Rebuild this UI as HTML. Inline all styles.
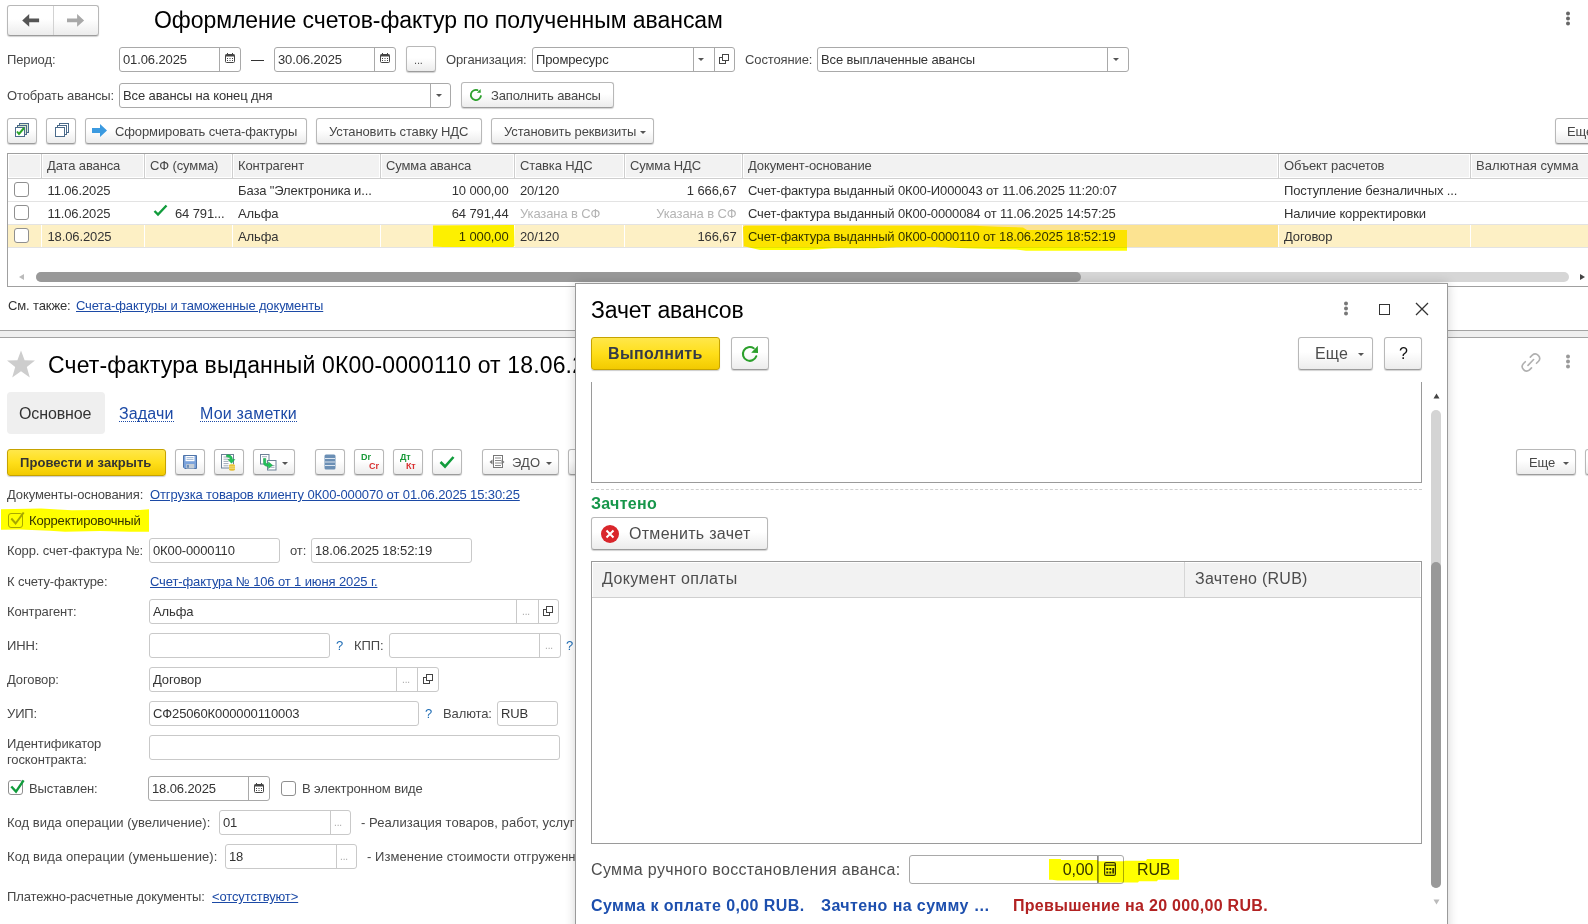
<!DOCTYPE html>
<html><head><meta charset="utf-8">
<style>
*{box-sizing:border-box}
html,body{margin:0;padding:0;width:1588px;height:924px;overflow:hidden;background:#fff;position:relative}
body{font-family:"Liberation Sans",sans-serif;font-size:13px;color:#474747}
.a{position:absolute}
.t{position:absolute;white-space:nowrap;line-height:18px;letter-spacing:-0.12px}
.f{position:absolute;border:1px solid #a9a9a9;border-radius:3px;background:#fff}
.f2{position:absolute;border:1px solid #c9c9c9;border-radius:3px;background:#fff}
.dv{position:absolute;top:0;bottom:0;width:1px;background:#a9a9a9}
.dv2{position:absolute;top:0;bottom:0;width:1px;background:#c9c9c9}
.b{position:absolute;border:1px solid #b8b8b8;border-bottom-color:#9c9c9c;border-radius:3px;background:linear-gradient(#fff 0%,#fff 45%,#ececec 100%);box-shadow:0 1px 1px rgba(0,0,0,.18)}
.by{position:absolute;border:1px solid #c6a300;border-radius:3px;background:linear-gradient(#ffe74a 0%,#ffdf1a 50%,#f2ca00 100%);box-shadow:0 1px 1px rgba(0,0,0,.2)}
.dd{position:absolute;width:0;height:0;border-left:3.5px solid transparent;border-right:3.5px solid transparent;border-top:3.5px solid #555}
.lnk{color:#1c4aa6;text-decoration:underline}
.hl{position:absolute;background:#ffff00;mix-blend-mode:multiply}
.hs{position:absolute;mix-blend-mode:multiply}
.cb{position:absolute;width:15px;height:15px;border:1px solid #8f8f8f;border-radius:3px;background:#fff}
</style></head><body>

<!-- ===== TOP HEADER ===== -->
<div class="b" style="left:7px;top:5px;width:92px;height:31px"></div>
<div class="a" style="left:53px;top:6px;width:1px;height:29px;background:#d2d2d2"></div>
<svg class="a" style="left:21px;top:13px" width="20" height="15" viewBox="0 0 20 15"><path d="M1.2 7.4 L8.2 1.1 L8.2 5.6 L18.1 5.6 L18.1 9.2 L8.2 9.2 L8.2 13.7 Z" fill="#555"/></svg>
<svg class="a" style="left:66px;top:13px" width="20" height="15" viewBox="0 0 20 15"><path d="M18.1 7.4 L11.1 1.1 L11.1 5.6 L1 5.6 L1 9.2 L11.1 9.2 L11.1 13.7 Z" fill="#a8a8a8"/></svg>
<div class="t" style="left:154px;top:6px;font-size:23px;line-height:28px;color:#000;letter-spacing:-0.05px">Оформление счетов-фактур по полученным авансам</div>
<svg class="a" style="left:1564px;top:11px" width="8" height="16"><circle cx="4" cy="2.5" r="2" fill="#666"/><circle cx="4" cy="7.5" r="2" fill="#666"/><circle cx="4" cy="12.5" r="2" fill="#666"/></svg>

<!-- row 1 -->
<div class="t" style="left:7px;top:51px">Период:</div>
<div class="f" style="left:119px;top:47px;width:122px;height:25px"><div class="dv" style="left:99px"></div></div>
<div class="t" style="left:123px;top:51px;color:#333">01.06.2025</div>
<svg class="a" style="left:225px;top:53px" width="10" height="10" viewBox="0 0 10 10"><rect x="0.5" y="1.5" width="9" height="8" rx="1" fill="none" stroke="#444" stroke-width="1"/><rect x="0.5" y="1.5" width="9" height="2" fill="#444"/><rect x="2" y="0" width="1" height="2" fill="#444"/><rect x="7" y="0" width="1" height="2" fill="#444"/><rect x="2" y="5" width="1" height="1" fill="#444"/><rect x="4.5" y="5" width="1" height="1" fill="#444"/><rect x="7" y="5" width="1" height="1" fill="#444"/><rect x="2" y="7" width="1" height="1" fill="#444"/><rect x="4.5" y="7" width="1" height="1" fill="#444"/><rect x="7" y="7" width="1" height="1" fill="#444"/></svg>
<div class="a" style="left:251px;top:60px;width:13px;height:1px;background:#333"></div>
<div class="f" style="left:274px;top:47px;width:122px;height:25px"><div class="dv" style="left:99px"></div></div>
<div class="t" style="left:278px;top:51px;color:#333">30.06.2025</div>
<svg class="a" style="left:380px;top:53px" width="10" height="10" viewBox="0 0 10 10"><rect x="0.5" y="1.5" width="9" height="8" rx="1" fill="none" stroke="#444" stroke-width="1"/><rect x="0.5" y="1.5" width="9" height="2" fill="#444"/><rect x="2" y="0" width="1" height="2" fill="#444"/><rect x="7" y="0" width="1" height="2" fill="#444"/><rect x="2" y="5" width="1" height="1" fill="#444"/><rect x="4.5" y="5" width="1" height="1" fill="#444"/><rect x="7" y="5" width="1" height="1" fill="#444"/><rect x="2" y="7" width="1" height="1" fill="#444"/><rect x="4.5" y="7" width="1" height="1" fill="#444"/><rect x="7" y="7" width="1" height="1" fill="#444"/></svg>
<div class="b" style="left:406px;top:46px;width:30px;height:26px"></div>
<div class="t" style="left:414px;top:51px;font-size:11px;color:#555">...</div>
<div class="t" style="left:446px;top:51px">Организация:</div>
<div class="f" style="left:532px;top:47px;width:203px;height:25px"><div class="dv" style="left:160px"></div><div class="dv" style="left:181px"></div></div>
<div class="t" style="left:536px;top:51px;color:#333">Промресурс</div>
<div class="dd" style="left:698px;top:58px"></div>
<svg class="a" style="left:718px;top:53px" width="12" height="12" viewBox="0 0 12 12"><rect x="1.5" y="4.5" width="6" height="6" fill="#fff" stroke="#444"/><rect x="4.5" y="1.5" width="6" height="6" fill="#fff" stroke="#444"/></svg>
<div class="t" style="left:745px;top:51px">Состояние:</div>
<div class="f" style="left:817px;top:47px;width:312px;height:25px"><div class="dv" style="left:289px"></div></div>
<div class="t" style="left:821px;top:51px;color:#333">Все выплаченные авансы</div>
<div class="dd" style="left:1113px;top:58px"></div>

<!-- row 2 -->
<div class="t" style="left:7px;top:87px">Отобрать авансы:</div>
<div class="f" style="left:119px;top:83px;width:332px;height:25px"><div class="dv" style="left:310px"></div></div>
<div class="t" style="left:123px;top:87px;color:#333">Все авансы на конец дня</div>
<div class="dd" style="left:436px;top:94px"></div>
<div class="b" style="left:461px;top:82px;width:153px;height:26px"></div>
<svg class="a" style="left:467px;top:86px" width="18" height="18" viewBox="0 0 18 18"><path d="M13.94 10.01 A5.1 5.1 0 1 1 10.53 4.10" fill="none" stroke="#2ca02c" stroke-width="1.8" stroke-linecap="round"/><path d="M13.6 2.9 L13.8 6.8 L9.9 6.7 Z" fill="#2ca02c"/></svg>
<div class="t" style="left:491px;top:87px">Заполнить авансы</div>

<!-- toolbar -->
<div class="b" style="left:7px;top:118px;width:30px;height:26px"></div>
<svg class="a" style="left:13px;top:122px" width="18" height="18" viewBox="0 0 18 18"><rect x="6.5" y="1.5" width="9" height="9" fill="#d8e8d0" stroke="#4a6a8a"/><rect x="4.5" y="3.5" width="9" height="9" fill="#d8e8d0" stroke="#4a6a8a"/><rect x="2.5" y="5.5" width="9" height="9" fill="#fff" stroke="#4a6a8a"/><path d="M4 9.5 L6 12 L11 6" fill="none" stroke="#2aa52a" stroke-width="2"/></svg>
<div class="b" style="left:46px;top:118px;width:30px;height:26px"></div>
<svg class="a" style="left:53px;top:122px" width="18" height="18" viewBox="0 0 18 18"><rect x="6.5" y="1.5" width="9" height="9" fill="#fff" stroke="#4a6a8a"/><rect x="4.5" y="3.5" width="9" height="9" fill="#fff" stroke="#4a6a8a"/><rect x="2.5" y="5.5" width="9" height="9" fill="#fff" stroke="#4a6a8a"/></svg>
<div class="b" style="left:85px;top:118px;width:222px;height:26px"></div>
<svg class="a" style="left:92px;top:124px" width="16" height="13" viewBox="0 0 16 13"><path d="M0 4 L8 4 L8 0 L15 6.5 L8 13 L8 9 L0 9 Z" fill="#3b9ae0"/></svg>
<div class="t" style="left:115px;top:123px">Сформировать счета-фактуры</div>
<div class="b" style="left:316px;top:118px;width:166px;height:26px"></div>
<div class="t" style="left:329px;top:123px">Установить ставку НДС</div>
<div class="b" style="left:491px;top:118px;width:163px;height:26px"></div>
<div class="t" style="left:504px;top:123px">Установить реквизиты</div>
<div class="dd" style="left:640px;top:131px"></div>
<div class="b" style="left:1555px;top:118px;width:60px;height:26px"></div>
<div class="t" style="left:1567px;top:123px">Еще</div>

<!-- table -->
<div class="a" style="left:7px;top:153px;width:1600px;height:134px;border:1px solid #a0a0a0;background:#fff"></div>
<div class="a" style="left:9px;top:155px;width:1590px;height:22px;background:#f2f2f2"></div>
<div class="a" style="left:8px;top:178px;width:1590px;height:1px;background:#cfcfcf"></div>
<!-- header column separators -->
<div class="a" style="left:40px;top:154px;width:3px;height:24px;background:linear-gradient(to right,#fff 0,#fff 1px,#cfcfcf 1px,#cfcfcf 2px,#fff 2px)"></div>
<div class="a" style="left:143px;top:154px;width:3px;height:24px;background:linear-gradient(to right,#fff 0,#fff 1px,#cfcfcf 1px,#cfcfcf 2px,#fff 2px)"></div>
<div class="a" style="left:231px;top:154px;width:3px;height:24px;background:linear-gradient(to right,#fff 0,#fff 1px,#cfcfcf 1px,#cfcfcf 2px,#fff 2px)"></div>
<div class="a" style="left:379px;top:154px;width:3px;height:24px;background:linear-gradient(to right,#fff 0,#fff 1px,#cfcfcf 1px,#cfcfcf 2px,#fff 2px)"></div>
<div class="a" style="left:513px;top:154px;width:3px;height:24px;background:linear-gradient(to right,#fff 0,#fff 1px,#cfcfcf 1px,#cfcfcf 2px,#fff 2px)"></div>
<div class="a" style="left:623px;top:154px;width:3px;height:24px;background:linear-gradient(to right,#fff 0,#fff 1px,#cfcfcf 1px,#cfcfcf 2px,#fff 2px)"></div>
<div class="a" style="left:741px;top:154px;width:3px;height:24px;background:linear-gradient(to right,#fff 0,#fff 1px,#cfcfcf 1px,#cfcfcf 2px,#fff 2px)"></div>
<div class="a" style="left:1277px;top:154px;width:3px;height:24px;background:linear-gradient(to right,#fff 0,#fff 1px,#cfcfcf 1px,#cfcfcf 2px,#fff 2px)"></div>
<div class="a" style="left:1469px;top:154px;width:3px;height:24px;background:linear-gradient(to right,#fff 0,#fff 1px,#cfcfcf 1px,#cfcfcf 2px,#fff 2px)"></div>
<div class="t" style="left:47px;top:157px">Дата аванса</div>
<div class="t" style="left:150px;top:157px">СФ (сумма)</div>
<div class="t" style="left:238px;top:157px">Контрагент</div>
<div class="t" style="left:386px;top:157px">Сумма аванса</div>
<div class="t" style="left:520px;top:157px">Ставка НДС</div>
<div class="t" style="left:630px;top:157px">Сумма НДС</div>
<div class="t" style="left:748px;top:157px">Документ-основание</div>
<div class="t" style="left:1284px;top:157px">Объект расчетов</div>
<div class="t" style="left:1476px;top:157px;letter-spacing:0.05px">Валютная сумма</div>

<!-- rows -->
<div class="a" style="left:8px;top:201px;width:1590px;height:1px;background:#e3e3e3"></div>
<div class="a" style="left:8px;top:224px;width:1590px;height:1px;background:#e3e3e3"></div>
<div class="a" style="left:8px;top:247px;width:1590px;height:1px;background:#e3e3e3"></div>
<!-- selected row -->
<div class="a" style="left:8px;top:225px;width:1590px;height:22px;background:#fdf0c5"></div>
<div class="a" style="left:41px;top:225px;width:1px;height:22px;background:#fff"></div>
<div class="a" style="left:144px;top:225px;width:1px;height:22px;background:#fff"></div>
<div class="a" style="left:232px;top:225px;width:1px;height:22px;background:#fff"></div>
<div class="a" style="left:380px;top:225px;width:1px;height:22px;background:#fff"></div>
<div class="a" style="left:514px;top:225px;width:1px;height:22px;background:#fff"></div>
<div class="a" style="left:624px;top:225px;width:1px;height:22px;background:#fff"></div>
<div class="a" style="left:742px;top:225px;width:1px;height:22px;background:#fff"></div>
<div class="a" style="left:743px;top:225px;width:535px;height:22px;background:#fce391"></div>
<div class="a" style="left:1278px;top:225px;width:1px;height:22px;background:#fff"></div>
<div class="a" style="left:1470px;top:225px;width:1px;height:22px;background:#fff"></div>

<div class="cb" style="left:14px;top:182px"></div>
<div class="cb" style="left:14px;top:205px"></div>
<div class="cb" style="left:14px;top:228px"></div>

<div class="t" style="left:47.5px;top:182px;color:#333">11.06.2025</div>
<div class="t" style="left:238px;top:182px;color:#333">База "Электроника и...</div>
<div class="t" style="right:1079.5px;top:182px;color:#333">10 000,00</div>
<div class="t" style="left:520px;top:182px;color:#333">20/120</div>
<div class="t" style="right:851.5px;top:182px;color:#333">1 666,67</div>
<div class="t" style="left:748px;top:182px;color:#333;letter-spacing:-0.14px">Счет-фактура выданный 0К00-И000043 от 11.06.2025 11:20:07</div>
<div class="t" style="left:1284px;top:182px;color:#333">Поступление безналичных ...</div>

<div class="t" style="left:47.5px;top:205px;color:#333">11.06.2025</div>
<svg class="a" style="left:153px;top:204px" width="15" height="13" viewBox="0 0 15 13"><path d="M1.5 7 L5 10.5 L13.5 1.5" fill="none" stroke="#119c3c" stroke-width="2.4"/></svg>
<div class="t" style="left:175px;top:205px;color:#333">64 791...</div>
<div class="t" style="left:238px;top:205px;color:#333">Альфа</div>
<div class="t" style="right:1079.5px;top:205px;color:#333">64 791,44</div>
<div class="t" style="left:520px;top:205px;color:#b4b4b4">Указана в СФ</div>
<div class="t" style="right:851.5px;top:205px;color:#b4b4b4">Указана в СФ</div>
<div class="t" style="left:748px;top:205px;color:#333;letter-spacing:-0.14px">Счет-фактура выданный 0К00-0000084 от 11.06.2025 14:57:25</div>
<div class="t" style="left:1284px;top:205px;color:#333">Наличие корректировки</div>

<!-- highlights top table -->



<div class="t" style="left:47.5px;top:228px;color:#333">18.06.2025</div>
<div class="t" style="left:238px;top:228px;color:#333">Альфа</div>
<div class="t" style="right:1079.5px;top:228px;color:#333">1 000,00</div>
<div class="t" style="left:520px;top:228px;color:#333">20/120</div>
<div class="t" style="right:851.5px;top:228px;color:#333">166,67</div>
<div class="t" style="left:748px;top:228px;color:#333;letter-spacing:-0.14px">Счет-фактура выданный 0К00-0000110 от 18.06.2025 18:52:19</div>
<div class="t" style="left:1284px;top:228px;color:#333">Договор</div>

<!-- h scrollbar -->
<svg class="a" style="left:18px;top:273px" width="8" height="8"><path d="M1 4 L6 1 L6 7 Z" fill="#bbb"/></svg>
<div class="a" style="left:36px;top:272px;width:1533px;height:10px;border-radius:5px;background:#d6d6d6"></div>
<div class="a" style="left:36px;top:272px;width:1045px;height:10px;border-radius:5px;background:#999"></div>
<svg class="a" style="left:1578px;top:273px" width="8" height="8"><path d="M7 4 L2 1 L2 7 Z" fill="#444"/></svg>

<div class="t" style="left:8px;top:297px;color:#333">См. также:</div>
<div class="t lnk" style="left:76px;top:297px;letter-spacing:-0.15px">Счета-фактуры и таможенные документы</div>

<!-- splitter -->
<div class="a" style="left:0;top:330px;width:1588px;height:8px;background:#efefef;border-top:1px solid #a3a3a3;border-bottom:1px solid #a3a3a3"></div>


<!-- ===== DOCUMENT FORM (bottom) ===== -->
<svg class="a" style="left:6px;top:350px" width="30" height="29" viewBox="0 0 30 29"><path d="M15 0.5 L18.6 10.3 L29 10.6 L20.8 17 L23.8 27.5 L15 21.3 L6.2 27.5 L9.2 17 L1 10.6 L11.4 10.3 Z" fill="#cdcdcd"/></svg>
<div class="t" style="left:48px;top:350.5px;font-size:23px;line-height:28px;color:#000;letter-spacing:0.15px">Счет-фактура выданный 0К00-0000110 от 18.06.2025</div>
<svg class="a" style="left:1515px;top:345px" width="30" height="33" viewBox="0 0 30 33"><path d="M15.3 12.1 L17.3 10.1 A4.4 4.4 0 0 1 23.5 16.3 L21.5 18.3 M10.3 16.7 L8.3 18.7 A4.4 4.4 0 0 0 14.5 24.9 L16.5 22.9 M13 20.4 L18.6 14.5" fill="none" stroke="#b0b0b0" stroke-width="1.6" stroke-linecap="round"/></svg>
<svg class="a" style="left:1564px;top:354px" width="8" height="16"><circle cx="4" cy="2.5" r="2" fill="#999"/><circle cx="4" cy="7.5" r="2" fill="#999"/><circle cx="4" cy="12.5" r="2" fill="#999"/></svg>

<div class="a" style="left:7px;top:392px;width:98px;height:42px;background:#efefef;border-radius:4px"></div>
<div class="t" style="left:19px;top:405px;font-size:16px;line-height:18px;color:#333">Основное</div>
<div class="t" style="left:119px;top:406px;font-size:16px;line-height:15px;letter-spacing:0.15px;color:#1c4aa6;border-bottom:1px dotted #1c4aa6">Задачи</div>
<div class="t" style="left:200px;top:406px;font-size:16px;line-height:15px;letter-spacing:0.2px;color:#1c4aa6;border-bottom:1px dotted #1c4aa6">Мои заметки</div>

<div class="by" style="left:7px;top:449px;width:159px;height:27px"></div>
<div class="t" style="left:20px;top:454px;font-weight:bold;color:#333;letter-spacing:0.06px">Провести и закрыть</div>
<div class="b" style="left:175px;top:449px;width:30px;height:26px"></div>
<svg class="a" style="left:183px;top:455px" width="14" height="14" viewBox="0 0 14 14"><path d="M0.5 0.5 H13.5 V13.5 H1.8 L0.5 12.2 Z" fill="#7ba3dc" stroke="#4f74a8"/><rect x="2.5" y="1" width="9" height="5.2" fill="#fff"/><path d="M3.5 2.6h7M3.5 4.4h7" stroke="#8aa6cc" stroke-width="0.8"/><rect x="3.3" y="9" width="8" height="4.5" fill="#c4cdd6"/><rect x="4.2" y="9.8" width="1.6" height="3" fill="#5a7fb0"/></svg>
<div class="b" style="left:214px;top:449px;width:30px;height:26px"></div>
<svg class="a" style="left:221px;top:453px" width="16" height="18" viewBox="0 0 16 18"><rect x="0.5" y="1.5" width="12" height="13.5" fill="#fff" stroke="#6d8197"/><path d="M2.5 4h5M2.5 6.2h5M2.5 8.4h5M2.5 10.6h5M2.5 12.8h5" stroke="#8796a8" stroke-width="0.8"/><path d="M5.5 2 Q11 1 11.5 6.5 L13.8 6.5 L10.5 10.3 L7 6.5 L9.3 6.5 Q9 3.8 5.5 3.8 Z" fill="#22c25a" stroke="#139a40" stroke-width="0.5"/><ellipse cx="11" cy="12.3" rx="3" ry="1.2" fill="#f1d35a"/><rect x="8" y="12.3" width="6" height="4.2" fill="#e6bd2e"/><ellipse cx="11" cy="16.5" rx="3" ry="1.2" fill="#e6bd2e"/><path d="M8 13.8h6M8 15.3h6" stroke="#fff3b0" stroke-width="0.6"/></svg>
<div class="b" style="left:253px;top:449px;width:42px;height:26px"></div>
<svg class="a" style="left:260px;top:453px" width="18" height="18" viewBox="0 0 18 18"><rect x="0.5" y="1.5" width="8.5" height="9.5" fill="#fff" stroke="#6d8197"/><path d="M2 3.7h5" stroke="#8796a8" stroke-width="0.8"/><rect x="7.5" y="7.5" width="8.5" height="9.5" fill="#fff" stroke="#6d8197"/><path d="M10.5 12.5h4M10.5 14.3h4" stroke="#8796a8" stroke-width="0.8"/><path d="M3.5 5.5 L5.8 5.5 L5.8 9.5 Q6 11.3 8.5 11 L8.5 9 L12.5 12.2 L8.5 15.5 L8.5 13.3 Q3.5 13.7 3.5 9.5 Z" fill="#22c25a" stroke="#139a40" stroke-width="0.5"/></svg>
<div class="dd" style="left:282px;top:462px"></div>
<div class="b" style="left:315px;top:449px;width:30px;height:26px"></div>
<svg class="a" style="left:324px;top:454px" width="12" height="16" viewBox="0 0 12 16"><rect x="0.5" y="0.5" width="11" height="15" rx="1.5" fill="#6b8fb5"/><path d="M1 4.5h10M1 8h10M1 11.5h10" stroke="#dde6f0" stroke-width="1.2"/></svg>
<div class="b" style="left:354px;top:449px;width:30px;height:26px"></div>
<div class="t" style="left:361px;top:452px;font-size:9px;line-height:10px;font-weight:bold;color:#1a9a3a">Dr</div>
<div class="t" style="left:369px;top:461px;font-size:9px;line-height:10px;font-weight:bold;color:#d93030">Cr</div>
<div class="b" style="left:393px;top:449px;width:30px;height:26px"></div>
<div class="t" style="left:400px;top:452px;font-size:9px;line-height:10px;font-weight:bold;color:#1a9a3a">Дт</div>
<div class="t" style="left:406px;top:461px;font-size:9px;line-height:10px;font-weight:bold;color:#d93030">Кт</div>
<div class="b" style="left:432px;top:449px;width:30px;height:26px"></div>
<svg class="a" style="left:439px;top:455px" width="16" height="14" viewBox="0 0 16 14"><path d="M1.5 7 L6 11.5 L14.5 2" fill="none" stroke="#119c3c" stroke-width="2.6"/></svg>
<div class="b" style="left:482px;top:449px;width:77px;height:26px"></div>
<svg class="a" style="left:489px;top:454px" width="16" height="16" viewBox="0 0 16 16"><rect x="4.5" y="1.5" width="9" height="12" fill="#fff" stroke="#777"/><path d="M6 4h6M6 6.5h6M6 9h6M6 11.5h6" stroke="#888"/><path d="M0.5 8 L3.5 5.5 L3.5 10.5 Z" fill="#777"/><path d="M15.5 8 L12.5 5.5 L12.5 10.5 Z" fill="#777"/></svg>
<div class="t" style="left:512px;top:454px;color:#4d4d4d;letter-spacing:0.2px">ЭДО</div>
<div class="dd" style="left:546px;top:462px"></div>
<div class="b" style="left:568px;top:449px;width:30px;height:26px"></div>
<div class="b" style="left:1516px;top:449px;width:60px;height:26px"></div>
<div class="t" style="left:1529px;top:454px">Еще</div>
<div class="dd" style="left:1563px;top:462px"></div>
<div class="b" style="left:1585px;top:449px;width:30px;height:26px"></div>

<div class="t" style="left:7px;top:486px">Документы-основания:</div>
<div class="t lnk" style="left:150px;top:486px">Отгрузка товаров клиенту 0К00-000070 от 01.06.2025 15:30:25</div>


<div class="cb" style="left:8px;top:513px;width:15px;height:15px;border-color:#a8a8a8"></div>
<svg class="a" style="left:9px;top:511px" width="16" height="15" viewBox="0 0 16 15"><path d="M2.3 7.5 L6.6 12.5 L14.7 1.5" fill="none" stroke="#a6a6a6" stroke-width="2"/></svg>
<div class="t" style="left:29px;top:512px;color:#333;letter-spacing:-0.17px">Корректировочный</div>

<div class="t" style="left:7px;top:542px">Корр. счет-фактура №:</div>
<div class="f2" style="left:149px;top:538px;width:131px;height:25px"></div>
<div class="t" style="left:153px;top:542px;color:#333">0К00-0000110</div>
<div class="t" style="left:290px;top:542px">от:</div>
<div class="f2" style="left:311px;top:538px;width:161px;height:25px"></div>
<div class="t" style="left:315px;top:542px;color:#333">18.06.2025 18:52:19</div>

<div class="t" style="left:7px;top:573px">К счету-фактуре:</div>
<div class="t lnk" style="left:150px;top:573px">Счет-фактура № 106 от 1 июня 2025 г.</div>

<div class="t" style="left:7px;top:603px">Контрагент:</div>
<div class="f2" style="left:149px;top:599px;width:410px;height:25px"><div class="dv2" style="left:366px"></div><div class="dv2" style="left:388px"></div></div>
<div class="t" style="left:153px;top:603px;color:#333">Альфа</div>
<div class="t" style="left:522px;top:603px;font-size:10px;color:#aaa">...</div>
<svg class="a" style="left:542px;top:605px" width="12" height="12" viewBox="0 0 12 12"><rect x="1.5" y="4.5" width="6" height="6" fill="#fff" stroke="#444"/><rect x="4.5" y="1.5" width="6" height="6" fill="#fff" stroke="#444"/></svg>

<div class="t" style="left:7px;top:637px">ИНН:</div>
<div class="f2" style="left:149px;top:633px;width:181px;height:25px"></div>
<div class="t" style="left:336px;top:637px;color:#1f6db5">?</div>
<div class="t" style="left:354px;top:637px">КПП:</div>
<div class="f2" style="left:389px;top:633px;width:172px;height:25px"><div class="dv2" style="left:149px"></div></div>
<div class="t" style="left:545px;top:637px;font-size:10px;color:#aaa">...</div>
<div class="t" style="left:566px;top:637px;color:#1f6db5">?</div>

<div class="t" style="left:7px;top:671px">Договор:</div>
<div class="f2" style="left:149px;top:667px;width:290px;height:25px"><div class="dv2" style="left:246px"></div><div class="dv2" style="left:267px"></div></div>
<div class="t" style="left:153px;top:671px;color:#333">Договор</div>
<div class="t" style="left:402px;top:671px;font-size:10px;color:#aaa">...</div>
<svg class="a" style="left:422px;top:673px" width="12" height="12" viewBox="0 0 12 12"><rect x="1.5" y="4.5" width="6" height="6" fill="#fff" stroke="#444"/><rect x="4.5" y="1.5" width="6" height="6" fill="#fff" stroke="#444"/></svg>

<div class="t" style="left:7px;top:705px">УИП:</div>
<div class="f2" style="left:149px;top:701px;width:270px;height:25px"></div>
<div class="t" style="left:153px;top:705px;color:#333">СФ25060К000000110003</div>
<div class="t" style="left:425px;top:705px;color:#1f6db5">?</div>
<div class="t" style="left:443px;top:705px">Валюта:</div>
<div class="f2" style="left:497px;top:701px;width:61px;height:25px"></div>
<div class="t" style="left:501px;top:705px;color:#333">RUB</div>

<div class="t" style="left:7px;top:735px">Идентификатор</div>
<div class="t" style="left:7px;top:751px">госконтракта:</div>
<div class="f2" style="left:149px;top:735px;width:411px;height:25px"></div>

<div class="cb" style="left:8px;top:780px"></div>
<svg class="a" style="left:9px;top:778px" width="17" height="17" viewBox="0 0 17 17"><path d="M2.3 8.5 L7 13.6 L14.6 2.4" fill="none" stroke="#119c3c" stroke-width="2.4"/></svg>
<div class="t" style="left:29px;top:780px">Выставлен:</div>
<div class="f" style="left:148px;top:776px;width:122px;height:25px"><div class="dv" style="left:99px"></div></div>
<div class="t" style="left:152px;top:780px;color:#333">18.06.2025</div>
<svg class="a" style="left:254px;top:783px" width="10" height="10" viewBox="0 0 10 10"><rect x="0.5" y="1.5" width="9" height="8" rx="1" fill="none" stroke="#444" stroke-width="1"/><rect x="0.5" y="1.5" width="9" height="2" fill="#444"/><rect x="2" y="0" width="1" height="2" fill="#444"/><rect x="7" y="0" width="1" height="2" fill="#444"/><rect x="2" y="5" width="1" height="1" fill="#444"/><rect x="4.5" y="5" width="1" height="1" fill="#444"/><rect x="7" y="5" width="1" height="1" fill="#444"/><rect x="2" y="7" width="1" height="1" fill="#444"/><rect x="4.5" y="7" width="1" height="1" fill="#444"/><rect x="7" y="7" width="1" height="1" fill="#444"/></svg>
<div class="cb" style="left:281px;top:781px"></div>
<div class="t" style="left:302px;top:780px">В электронном виде</div>

<div class="t" style="left:7px;top:814px;letter-spacing:0.02px">Код вида операции (увеличение):</div>
<div class="f2" style="left:219px;top:810px;width:132px;height:25px"><div class="dv2" style="left:110px"></div></div>
<div class="t" style="left:223px;top:814px;color:#333">01</div>
<div class="t" style="left:334px;top:814px;font-size:10px;color:#aaa">...</div>
<div class="t" style="left:361px;top:814px;letter-spacing:0.05px">- Реализация товаров, работ, услуг</div>

<div class="t" style="left:7px;top:848px;letter-spacing:0.08px">Код вида операции (уменьшение):</div>
<div class="f2" style="left:225px;top:844px;width:132px;height:25px"><div class="dv2" style="left:110px"></div></div>
<div class="t" style="left:229px;top:848px;color:#333">18</div>
<div class="t" style="left:340px;top:848px;font-size:10px;color:#aaa">...</div>
<div class="t" style="left:367px;top:848px;letter-spacing:0.05px">- Изменение стоимости отгруженных</div>

<div class="t" style="left:7px;top:888px">Платежно-расчетные документы:</div>
<div class="t lnk" style="left:212px;top:888px">&lt;отсутствуют&gt;</div>


<!-- ===== DIALOG ===== -->
<div class="a" style="left:575px;top:283px;width:873px;height:660px;background:#fff;border:1px solid #9a9a9a;box-shadow:0 0 10px rgba(0,0,0,.18)"></div>
<div class="t" style="left:591px;top:296px;font-size:23px;line-height:28px;color:#000">Зачет авансов</div>
<svg class="a" style="left:1342px;top:301px" width="8" height="16"><circle cx="4" cy="2.5" r="2" fill="#777"/><circle cx="4" cy="7.5" r="2" fill="#777"/><circle cx="4" cy="12.5" r="2" fill="#777"/></svg>
<div class="a" style="left:1379px;top:304px;width:11px;height:11px;border:1.3px solid #333"></div>
<svg class="a" style="left:1415px;top:302px" width="14" height="14" viewBox="0 0 14 14"><path d="M1 1 L13 13 M13 1 L1 13" stroke="#333" stroke-width="1.3"/></svg>

<div class="by" style="left:591px;top:337px;width:129px;height:33px"></div>
<div class="t" style="left:608px;top:345px;font-size:16px;line-height:18px;font-weight:bold;color:#343a48;letter-spacing:0.35px">Выполнить</div>
<div class="b" style="left:731px;top:337px;width:38px;height:33px"></div>
<svg class="a" style="left:740px;top:344px" width="20" height="20" viewBox="0 0 20 20"><path d="M16.28 12.26 A6.9 6.9 0 1 1 13.76 4.25" fill="none" stroke="#2ca02c" stroke-width="2.1" stroke-linecap="round"/><path d="M17.8 1.8 L18 8.9 L11.2 8.8 Z" fill="#2ca02c"/></svg>
<div class="b" style="left:1298px;top:337px;width:75px;height:33px"></div>
<div class="t" style="left:1315px;top:345px;font-size:16px;line-height:18px;color:#4d4d4d;letter-spacing:0.2px">Еще</div>
<div class="dd" style="left:1358px;top:353px"></div>
<div class="b" style="left:1384px;top:337px;width:38px;height:33px"></div>
<div class="t" style="left:1399px;top:345px;font-size:16px;line-height:18px;color:#111;letter-spacing:0">?</div>

<div class="a" style="left:591px;top:382px;width:831px;height:101px;border-left:1px solid #9a9a9a;border-right:1px solid #9a9a9a;border-bottom:1px solid #9a9a9a"></div>
<div class="a" style="left:591px;top:489px;width:831px;height:1px;border-top:1px dashed #d0d0d0"></div>
<div class="t" style="left:591px;top:495px;font-size:16px;line-height:18px;font-weight:bold;color:#16964a;letter-spacing:0.28px">Зачтено</div>
<div class="b" style="left:591px;top:517px;width:177px;height:33px"></div>
<svg class="a" style="left:601px;top:525px" width="18" height="18" viewBox="0 0 18 18"><circle cx="9" cy="9" r="9" fill="#d9262b"/><path d="M5.5 5.5 L12.5 12.5 M12.5 5.5 L5.5 12.5" stroke="#fff" stroke-width="2"/></svg>
<div class="t" style="left:629px;top:525px;font-size:16px;line-height:18px;color:#4d4d4d;letter-spacing:0.29px">Отменить зачет</div>

<div class="a" style="left:591px;top:561px;width:831px;height:283px;border:1px solid #9a9a9a"></div>
<div class="a" style="left:593px;top:563px;width:827px;height:34px;background:#f2f2f2"></div>
<div class="a" style="left:592px;top:597px;width:829px;height:1px;background:#cfcfcf"></div>
<div class="a" style="left:1184px;top:562px;width:1px;height:35px;background:#d6d6d6"></div>
<div class="t" style="left:602px;top:570px;font-size:16px;line-height:18px;color:#4d4d4d;letter-spacing:0.4px">Документ оплаты</div>
<div class="t" style="left:1195px;top:570px;font-size:16px;line-height:18px;color:#4d4d4d;letter-spacing:0.27px">Зачтено (RUB)</div>

<div class="t" style="left:591px;top:861px;font-size:16px;line-height:18px;color:#4d4d4d;letter-spacing:0.35px">Сумма ручного восстановления аванса:</div>
<div class="f" style="left:909px;top:855px;width:215px;height:29px"><div class="dv" style="left:188px"></div></div>

<div class="a" style="left:1097px;top:856px;width:1px;height:27px;background:#888"></div>
<div class="t" style="right:494.6px;top:861px;font-size:16px;line-height:18px;color:#333">0,00</div>
<svg class="a" style="left:1104px;top:862px" width="12" height="14" viewBox="0 0 12 14"><rect x="0.6" y="0.6" width="10.8" height="12.8" rx="1.5" fill="none" stroke="#333" stroke-width="1.2"/><rect x="1" y="2.6" width="10" height="1.2" fill="#333"/><rect x="2.3" y="6" width="2" height="2" fill="#333"/><rect x="5.3" y="6" width="2" height="2" fill="#333"/><rect x="8.3" y="6" width="1.8" height="5.5" fill="#333"/><rect x="2.3" y="9.5" width="2" height="2" fill="#333"/><rect x="5.3" y="9.5" width="2" height="2" fill="#333"/></svg>
<div class="t" style="left:1137px;top:861px;font-size:16px;line-height:18px;color:#333">RUB</div>

<div class="t" style="left:591px;top:897px;font-size:16px;line-height:18px;font-weight:bold;color:#1d4fae;letter-spacing:0.4px">Сумма к оплате 0,00 RUB.</div>
<div class="t" style="left:821px;top:897px;font-size:16px;line-height:18px;font-weight:bold;color:#1d4fae;letter-spacing:0.4px">Зачтено на сумму …</div>
<div class="t" style="left:1013px;top:897px;font-size:16px;line-height:18px;font-weight:bold;color:#b22222;letter-spacing:0.3px">Превышение на 20 000,00 RUB.</div>

<svg class="a" style="left:1433px;top:393px" width="7" height="6"><path d="M0.5 5.5 L3.5 0.5 L6.5 5.5 Z" fill="#444"/></svg>
<div class="a" style="left:1431px;top:410px;width:10px;height:478px;border-radius:5px;background:#d4d4d4"></div>
<div class="a" style="left:1431px;top:562px;width:10px;height:326px;border-radius:5px;background:#999"></div>
<svg class="a" style="left:1433px;top:899px" width="7" height="6"><path d="M0.5 0.5 L3.5 5.5 L6.5 0.5 Z" fill="#bbb"/></svg>


<!-- ===== HIGHLIGHTS (multiply) ===== -->
<svg class="hs" style="left:430px;top:222px" width="90" height="30" viewBox="0 0 90 30"><path d="M3 3.5 L84 3 L84.5 24 L83 25 L13 25 L3 24.5 Z" fill="#ffff00"/></svg>
<svg class="hs" style="left:740px;top:222px" width="392" height="32" viewBox="0 0 392 32"><path d="M3 5 L5 3.8 L234 3.8 L258 4.8 L283 5.4 L287 8 L387 8 L387 28.7 L286 28.7 L276 27.5 L250 26.9 L226 26.2 L195 25 L157 25.2 L134 26.2 L93 26.2 L68 28 L20 28 L4 24.3 Z" fill="#ffff00"/></svg>
<svg class="hs" style="left:0px;top:506px" width="152" height="30" viewBox="0 0 152 30"><path d="M1 3.3 L41 2.6 L58 3.6 L72 4.2 L95 4 L140 4 L149 3.2 L149 25.8 L130 25.8 L100 25 L65 25.8 L50 24.8 L20 23.5 L1 23.8 Z" fill="#ffff00"/></svg>
<svg class="hs" style="left:1045px;top:855px" width="140" height="32" viewBox="0 0 140 32"><path d="M4 4 L15.8 4 L16 4.9 L52.7 4.9 L53 6.3 L79 6.3 L80 5.8 L101 5.8 L102 4 L134 4 L134 24.7 L113 24.7 L112 26.2 L94 26.2 L93 27.6 L53 27.6 L52.5 25.4 L12.5 25.4 L7 24.7 L4 24.7 Z" fill="#ffff00"/></svg>
</body></html>
